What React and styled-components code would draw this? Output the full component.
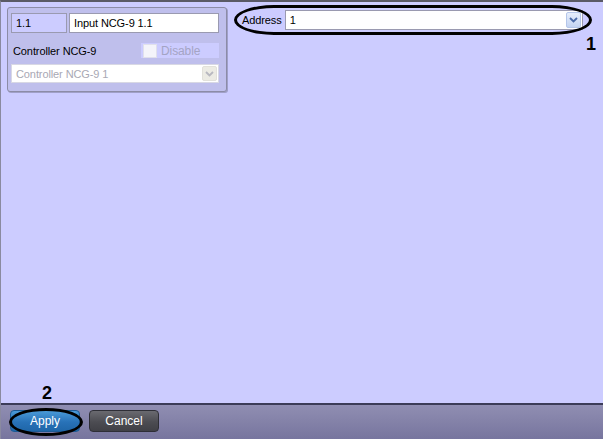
import styled, { createGlobalStyle } from 'styled-components';

const Global = createGlobalStyle`
  body {
    margin: 0;
    background: #ffffff;
    font-family: "Liberation Sans", Arial, sans-serif;
    font-size: 11px;
    letter-spacing: -0.1px;
  }
`;

const Frame = styled.div`
  position: relative;
  width: 603px;
  height: 439px;
  display: flex;
  flex-direction: column;
  background: #ccccff;
  border-top: 2px solid #5a5a66;
  border-left: 1px solid #8a8aa0;
  box-sizing: border-box;
`;

const Main = styled.div`
  flex: 1;
  display: flex;
  align-items: flex-start;
  gap: 13px;
  padding: 5px 0 0 6px;
`;

const Panel = styled.div`
  width: 220px;
  height: 85px;
  box-sizing: border-box;
  background: #bfbfec;
  border: 1px solid #8c8ca6;
  border-radius: 3px;
  box-shadow: 1px 1px 0 #a0a0c8;
  padding: 5px 7px 0 3px;
  display: flex;
  flex-direction: column;
`;

const Row = styled.div`
  display: flex;
  align-items: center;
  justify-content: space-between;
  height: ${p => p.$h || 20}px;
  margin-bottom: ${p => p.$mb || 0}px;
`;

const Field = styled.div`
  box-sizing: border-box;
  height: ${p => p.$h || 20}px;
  width: ${p => p.$w}px;
  border: 1px solid ${p => (p.$dim ? '#d8d8e4' : '#9a9ab0')};
  background: ${p => p.$bg || '#ffffff'};
  color: ${p => (p.$dim ? '#a8a8b4' : '#000')};
  padding: 0 4px;
  display: flex;
  align-items: center;
  justify-content: space-between;
  white-space: nowrap;
`;

const Label = styled.span`
  color: #000;
  padding-left: 2px;
`;

const DisableBox = styled.div`
  width: 78px;
  height: 15px;
  background: #ccccff;
  display: flex;
  align-items: center;
  gap: 4px;
  padding-left: 2px;
  box-sizing: border-box;
  color: #a4a4c4;
  font-size: 12px;
`;

const Check = styled.span`
  width: 12px;
  height: 12px;
  background: #f4f4fa;
  border: 1px solid #e0e0ec;
`;

const DropBtn = styled.span`
  width: 15px;
  height: ${p => (p.$dim ? 15 : 16)}px;
  margin-right: -3px;
  border-radius: 2px;
  display: flex;
  align-items: center;
  justify-content: center;
  background: ${p => (p.$dim ? '#ecebe4' : 'linear-gradient(#e6eefc, #c4d4f2)')};
  border: 1px solid ${p => (p.$dim ? '#e2e1da' : '#b4c6ea')};
  box-sizing: border-box;
`;

const AddressRow = styled.div`
  position: relative;
  display: flex;
  align-items: center;
  margin-top: 3px;
  gap: 3px;
`;

const Ellipse = styled.div`
  position: absolute;
  border: 3px solid #000;
  border-radius: ${p => p.$r || '50%'};
  box-sizing: border-box;
  left: ${p => p.$l}px;
  top: ${p => p.$t}px;
  width: ${p => p.$w}px;
  height: ${p => p.$h}px;
  pointer-events: none;
`;

const Callout = styled.span`
  position: absolute;
  left: ${p => p.$l}px;
  top: ${p => p.$t}px;
  font-family: "Liberation Sans", Arial, sans-serif;
  font-weight: bold;
  font-size: 18px;
  color: #000;
`;

const Footer = styled.div`
  position: relative;
  height: 36px;
  box-sizing: border-box;
  border-top: 2px solid #3c3c58;
  background: linear-gradient(#908eb2, #77759e);
  display: flex;
  align-items: center;
  gap: 9px;
  padding: 0 0 2px 9px;
`;

const Button = styled.button`
  width: 70px;
  height: 22px;
  border-radius: 4px;
  font-family: "Liberation Sans", Arial, sans-serif;
  font-size: 12px;
  color: #ffffff;
  border: 1px solid ${p => (p.$primary ? '#1d5a94' : '#2e2e36')};
  background: ${p =>
    p.$primary
      ? 'linear-gradient(#4a9ad8, #2872b8 55%, #1f66a8)'
      : 'linear-gradient(#6a6a70, #4c4c52 55%, #404046)'};
  padding: 0;
`;

const Chevron = ({ dim }) => (
  <svg width="9" height="6" viewBox="0 0 9 6">
    <path d="M1 1 L4.5 4.5 L8 1" fill="none" stroke={dim ? '#b8b8c0' : '#4a6aa8'} strokeWidth="1.8" />
  </svg>
);

export default function App() {
  return (
    <>
      <Global />
      <Frame>
        <Main>
          <Panel>
            <Row $mb={10}>
              <Field $w={56} $bg="#ccccff">1.1</Field>
              <Field $w={150}>Input NCG-9 1.1</Field>
            </Row>
            <Row $h={15} $mb={6}>
              <Label>Controller NCG-9</Label>
              <DisableBox>
                <Check />
                Disable
              </DisableBox>
            </Row>
            <Row $h={19}>
              <Field $w={209} $h={19} $dim>
                Controller NCG-9 1
                <DropBtn $dim>
                  <Chevron dim />
                </DropBtn>
              </Field>
            </Row>
          </Panel>
          <AddressRow>
            <Label>Address</Label>
            <Field $w={298}>
              1
              <DropBtn>
                <Chevron />
              </DropBtn>
            </Field>
            <Ellipse $l={-6} $t={-5} $w={358} $h={30} $r="40px / 15px" />
            <Callout $l={346} $t={24}>1</Callout>
          </AddressRow>
        </Main>
        <Footer>
          <Callout $l={41} $t={-22}>2</Callout>
          <Button $primary>Apply</Button>
          <Button>Cancel</Button>
          <Ellipse $l={8} $t={3} $w={74} $h={28} />
        </Footer>
      </Frame>
    </>
  );
}
